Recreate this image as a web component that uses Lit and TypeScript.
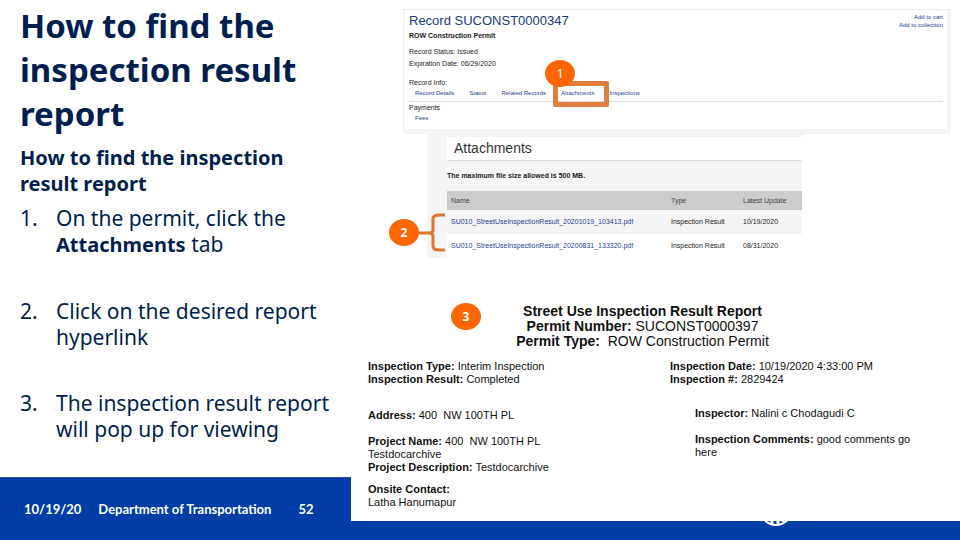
import { LitElement, html, css } from "lit";
import { customElement } from "lit/decorators.js";

const links = css`
  a {
    color: #1f3f8f;
    text-decoration: none;
  }
`;

const badge = css`
  .badge {
    position: absolute;
    display: flex;
    align-items: center;
    justify-content: center;
    width: 30px;
    height: 27px;
    border-radius: 50%;
    background: #ff6600;
    color: #fff;
    font: 12px/27px "Noto Sans", sans-serif;
  }
`;

@customElement("record-panel")
class RecordPanel extends LitElement {
  static styles = [
    links,
    badge,
    css`
      :host {
        display: block;
        font: 7px/12px "Liberation Sans", Arial, sans-serif;
        color: #222;
      }
      .panel {
        background: #fff;
        border: 1px solid #eee;
        border-right: 4px solid #f5f5f5;
        border-bottom: 5px solid #f5f5f5;
        padding: 3px 4px 3px 5px;
      }
      .top {
        display: flex;
        justify-content: space-between;
      }
      h2 {
        margin: 0;
        font-size: 13px;
        line-height: 16px;
        font-weight: 400;
        color: #1a3a82;
      }
      p {
        margin: 0;
      }
      .type {
        font-weight: 700;
        line-height: 14px;
        margin-bottom: 3px;
      }
      .side {
        display: flex;
        flex-direction: column;
        text-align: right;
        font-size: 6px;
        line-height: 8px;
      }
      .info {
        margin-top: 7px;
      }
      ul {
        display: flex;
        gap: 15px;
        list-style: none;
        margin: 0;
        padding: 0 6px 3px;
        font-size: 6px;
        line-height: 9px;
      }
      .tabs {
        border-bottom: 1px solid #ddd;
      }
      li {
        position: relative;
      }
      .frame {
        position: absolute;
        inset: -8px -15px -9px -8px;
        border: 5px solid #df7f3b;
        border-radius: 2px;
        pointer-events: none;
      }
      .one {
        left: -16px;
        top: -29px;
      }
    `,
  ];

  render() {
    return html`<section class="panel">
      <div class="top">
        <h2>Record SUCONST0000347</h2>
        <div class="side">
          <a href="#cart">Add to cart</a>
          <a href="#collection">Add to collection</a>
        </div>
      </div>
      <p class="type">ROW Construction Permit</p>
      <p>Record Status: Issued</p>
      <p>Expiration Date: 06/29/2020</p>
      <p class="info">Record Info:</p>
      <ul class="tabs">
        <li><a href="#details">Record Details</a></li>
        <li><a href="#status">Status</a></li>
        <li><a href="#related">Related Records</a></li>
        <li>
          <a href="#attachments">Attachments</a>
          <span class="frame"></span>
          <span class="badge one">1</span>
        </li>
        <li><a href="#inspections">Inspections</a></li>
      </ul>
      <p>Payments</p>
      <ul>
        <li><a href="#fees">Fees</a></li>
      </ul>
    </section>`;
  }
}

const files = [
  { name: "SU010_StreetUseInspectionResult_20201019_103413.pdf", date: "10/19/2020" },
  { name: "SU010_StreetUseInspectionResult_20200831_133320.pdf", date: "08/31/2020" },
];

@customElement("attachments-panel")
class AttachmentsPanel extends LitElement {
  static styles = [
    links,
    badge,
    css`
      :host {
        display: block;
        position: relative;
        font: 7px/12px "Liberation Sans", Arial, sans-serif;
        color: #222;
      }
      .panel {
        background: #f5f5f5;
        padding: 3px 0 0 20px;
      }
      h2 {
        margin: 0;
        padding-left: 7px;
        background: #fff;
        border-bottom: 1px solid #ddd;
        font-size: 14px;
        line-height: 23px;
        font-weight: 400;
        color: #333;
      }
      .limit {
        margin: 0;
        line-height: 30px;
        font-weight: 700;
      }
      table {
        width: 100%;
        border-collapse: collapse;
        table-layout: fixed;
        line-height: 12px;
      }
      th,
      td {
        text-align: left;
        font-weight: 400;
        padding: 0 0 0 4px;
        height: 24px;
        white-space: nowrap;
      }
      th {
        height: 19px;
        background: #ccc;
        color: #444;
      }
      .name {
        width: 216px;
      }
      .kind {
        width: 68px;
      }
      tbody tr:last-child td {
        background: #fff;
      }
      .two {
        left: -38px;
        top: 85px;
        font-weight: 700;
      }
      .bracket {
        position: absolute;
        left: -8px;
        top: 79px;
        width: 27px;
        height: 39px;
      }
    `,
  ];

  render() {
    return html`<section class="panel">
        <h2>Attachments</h2>
        <p class="limit">The maximum file size allowed is 500 MB.</p>
        <table>
          <thead>
            <tr>
              <th class="name">Name</th>
              <th class="kind">Type</th>
              <th>Latest Update</th>
            </tr>
          </thead>
          <tbody>
            ${files.map(
              (f) => html`<tr>
                <td><a href="#file">${f.name}</a></td>
                <td>Inspection Result</td>
                <td>${f.date}</td>
              </tr>`
            )}
          </tbody>
        </table>
      </section>
      <svg class="bracket" viewBox="0 0 27 39" fill="none" stroke="#dd7430" stroke-width="3">
        <path d="M26 2 H20 Q14 2 14 6 V17 Q14 20 10 20 H0 M10 20 Q14 20 14 23 V33 Q14 37 20 37 H26" />
      </svg>
      <span class="badge two">2</span>`;
  }
}

@customElement("inspection-report")
class InspectionReport extends LitElement {
  static styles = [
    badge,
    css`
      :host {
        display: block;
        position: relative;
        background: #fff;
        font: 11px/13px "Liberation Sans", Arial, sans-serif;
        color: #111;
      }
      h2 {
        margin: 0;
        padding: 12px 26px 11px 0;
        font-size: 14px;
        line-height: 15px;
        font-weight: 400;
        text-align: center;
        white-space: pre-wrap;
      }
      .cols {
        display: flex;
        gap: 24px;
        padding: 0 30px 12px 17px;
      }
      .left {
        flex: 278;
      }
      .right {
        flex: 260;
      }
      p {
        margin: 0 0 13px;
      }
      .left p:first-child {
        margin-bottom: 23px;
      }
      .right p:first-child {
        margin-bottom: 21px;
      }
      .left .project {
        margin-bottom: 9px;
      }
      .left p:last-child {
        margin-bottom: 0;
      }
      .shift {
        padding-left: 25px;
      }
      .three {
        left: 100px;
        top: 11px;
        font-weight: 700;
      }
    `,
  ];

  render() {
    return html`<h2><b>Street Use Inspection Result Report</b>
<b>Permit Number:</b> SUCONST0000397
<b>Permit Type:</b>  ROW Construction Permit</h2>
      <div class="cols">
        <div class="left">
          <p><b>Inspection Type:</b> Interim Inspection<br /><b>Inspection Result:</b> Completed</p>
          <p><b>Address:</b> 400&nbsp; NW 100TH PL</p>
          <p class="project"><b>Project Name:</b> 400&nbsp; NW 100TH PL<br />Testdocarchive<br /><b>Project Description:</b> Testdocarchive</p>
          <p><b>Onsite Contact:</b><br />Latha Hanumapur</p>
        </div>
        <div class="right">
          <p><b>Inspection Date:</b> 10/19/2020 4:33:00 PM<br /><b>Inspection #:</b> 2829424</p>
          <p class="shift"><b>Inspector:</b> Nalini c Chodagudi C</p>
          <p class="shift"><b>Inspection Comments:</b> good comments go<br />here</p>
        </div>
      </div>
      <span class="badge three">3</span>`;
  }
}

@customElement("app-root")
class AppRoot extends LitElement {
  static styles = css`
    :host {
      display: grid;
      grid-template-columns: 351fr 609fr;
      grid-template-rows: 1fr 63px;
      min-height: 100vh;
      background: #fff;
      color: #001f4f;
      font-family: "Noto Sans", sans-serif;
    }
    .steps {
      grid-area: 1 / 1;
      padding: 4px 16px 0 20px;
    }
    h1 {
      margin: 0 0 9px;
      font-size: 33px;
      line-height: 44px;
    }
    h2 {
      margin: 0 0 8px;
      font-size: 20px;
      line-height: 26px;
    }
    ol {
      list-style: none;
      margin: 0;
      padding: 0;
      display: flex;
      flex-direction: column;
      gap: 40px;
      font-size: 21px;
      line-height: 26px;
    }
    ol b {
      font-size: 20px;
    }
    li {
      display: grid;
      grid-template-columns: 36px 1fr;
    }
    footer {
      grid-area: 2 / 1 / 3 / 3;
      display: flex;
      align-items: center;
      background: #003da5;
      border-top: 1px solid #2f528f;
      color: #fff;
      font: 700 13px/16px Lato, sans-serif;
      padding-left: 24px;
    }
    .dept {
      margin: 0 27px 0 17px;
    }
    .logo {
      width: 34px;
      height: 34px;
      margin: 0 167px 0 auto;
    }
    .figures {
      grid-area: 1 / 2 / 3 / 3;
      align-self: start;
      padding-top: 9px;
    }
    record-panel {
      margin: 0 9px 0 52px;
    }
    attachments-panel {
      margin: 0 158px 34px 76px;
    }
  `;

  render() {
    return html`
      <main class="steps">
        <h1>How to find the inspection result report</h1>
        <h2>How to find the inspection result report</h2>
        <ol>
          <li><span>1.</span><span>On the permit, click the <b>Attachments</b> tab</span></li>
          <li><span>2.</span><span>Click on the desired report hyperlink</span></li>
          <li><span>3.</span><span>The inspection result report will pop up for viewing</span></li>
        </ol>
      </main>
      <footer>
        <span>10/19/20</span>
        <span class="dept">Department of Transportation</span>
        <span>52</span>
        <svg class="logo" viewBox="0 0 34 34" fill="none" stroke="#fff">
          <circle cx="17" cy="17" r="16" stroke-width="2" />
          <path d="M8 12 V29 M13 8 V33 M19 6 V33 M24 8 V30" stroke-width="3" />
        </svg>
      </footer>
      <div class="figures">
        <record-panel></record-panel>
        <attachments-panel></attachments-panel>
        <inspection-report></inspection-report>
      </div>
    `;
  }
}
